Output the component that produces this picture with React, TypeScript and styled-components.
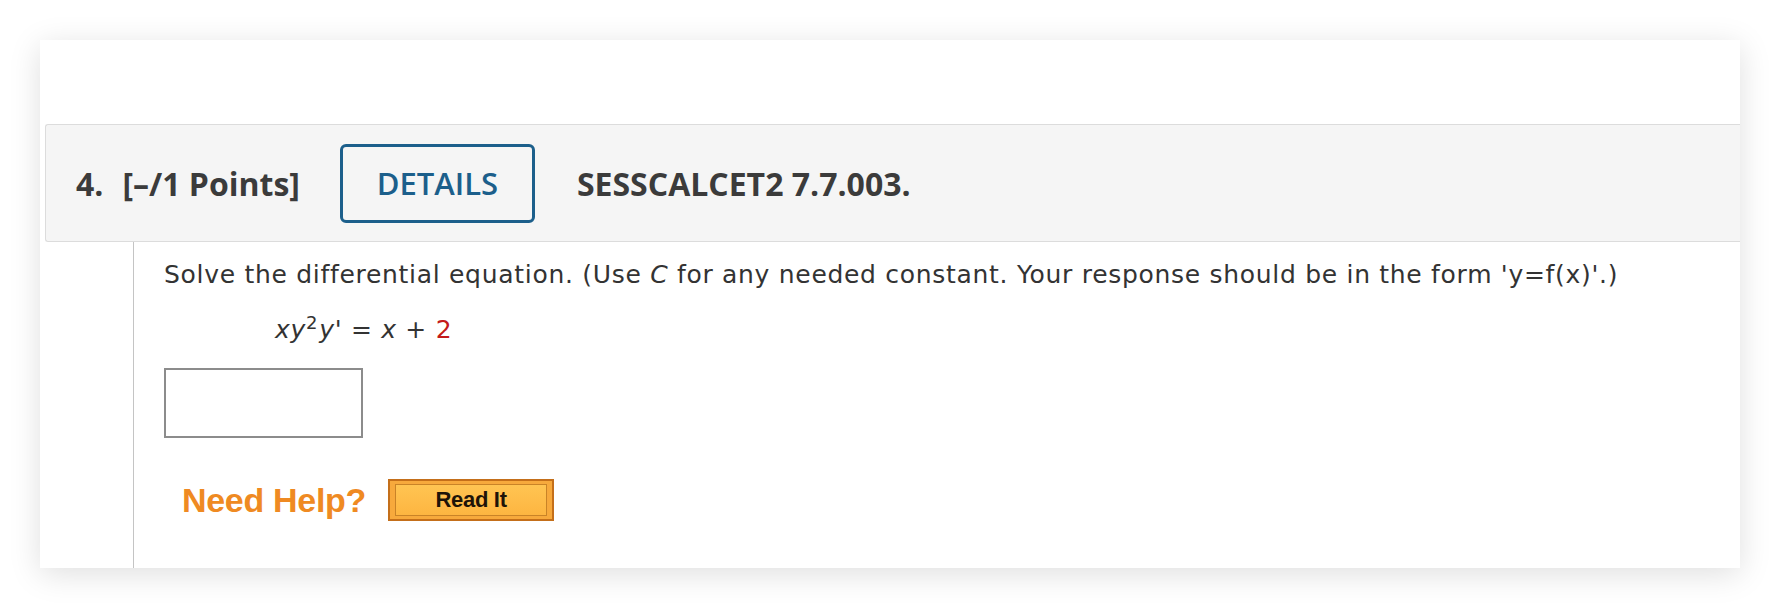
import React from "react";
import styled, { createGlobalStyle } from "styled-components";

const GlobalStyle = createGlobalStyle`
  html, body {
    margin: 0;
    padding: 0;
    background: #ffffff;
  }
`;

const Page = styled.div`
  padding: 40px;
  width: 1780px;
  height: 608px;
  box-sizing: border-box;
  overflow: hidden;
`;

const Card = styled.div`
  width: 1700px;
  height: 528px;
  background: #ffffff;
  box-shadow: 0 6px 30px rgba(0, 0, 0, 0.13);
  padding: 84px 0 0 5px;
  box-sizing: border-box;
  display: flex;
  flex-direction: column;
`;

const Header = styled.div`
  height: 118px;
  box-sizing: border-box;
  background: #f5f5f5;
  border: 1px solid #dcdcdc;
  border-right: none;
  border-radius: 3px 0 0 3px;
  display: flex;
  align-items: center;
  padding-left: 30px;
  font-family: "Open Sans", "DejaVu Sans", sans-serif;
  color: #3b3b3b;
`;

const Title = styled.span<{ gap?: number }>`
  font-size: 32px;
  font-weight: 700;
  margin-right: ${(p) => p.gap ?? 0}px;
`;

const DetailsButton = styled.button`
  width: 195px;
  height: 79px;
  box-sizing: border-box;
  border: 3px solid #1c5f8b;
  border-radius: 6px;
  background: transparent;
  color: #1c5f8b;
  font-family: "Open Sans", sans-serif;
  font-size: 31px;
  font-weight: 600;
  padding: 0;
  margin-right: 42px;
  cursor: pointer;
`;

const Body = styled.div`
  flex: 1;
  margin-left: 88px;
  border-left: 1px solid #c4c4c4;
  padding: 19px 0 0 30px;
  font-family: "DejaVu Sans", Verdana, sans-serif;
  font-size: 25px;
  line-height: 28px;
  letter-spacing: 0.7px;
  color: #333333;
`;

const Prompt = styled.div``;

const Equation = styled.div`
  margin: 27px 0 0 111px;
`;

const Var = styled.i`
  font-style: italic;
`;

const Sup = styled.sup`
  font-size: 18px;
  line-height: 0;
  vertical-align: 9px;
  margin-right: 1px;
`;

const Red = styled.span`
  color: #c41a1a;
`;

const AnswerBox = styled.input`
  display: block;
  margin-top: 24px;
  width: 199px;
  height: 70px;
  box-sizing: border-box;
  border: 2px solid #8c8c8c;
  background: #ffffff;
  outline: none;
`;

const HelpRow = styled.div`
  margin-top: 41px;
  display: flex;
  align-items: center;
  gap: 22px;
  padding-left: 18px;
`;

const NeedHelp = styled.span`
  font-family: "Liberation Sans", Arial, sans-serif;
  font-weight: 700;
  font-size: 34px;
  letter-spacing: -0.3px;
  color: #ef8a22;
`;

const ReadIt = styled.button`
  width: 166px;
  height: 42px;
  box-sizing: border-box;
  border: 2px solid #c46f1a;
  background: #f7a93c;
  padding: 3px 5px;
  cursor: pointer;
  display: flex;
`;

const ReadItFace = styled.span`
  flex: 1;
  border: 1px solid #c98327;
  background: linear-gradient(#ffc452, #fdb541);
  display: flex;
  align-items: center;
  justify-content: center;
  font-family: "Liberation Sans", Arial, sans-serif;
  font-weight: 700;
  font-size: 22px;
  letter-spacing: -0.3px;
  color: #1e1408;
`;

export default function App() {
  return (
    <>
      <GlobalStyle />
      <Page>
        <Card>
          <Header>
            <Title gap={19}>4.</Title>
            <Title gap={40}>[–/1 Points]</Title>
            <DetailsButton>DETAILS</DetailsButton>
            <Title>SESSCALCET2 7.7.003.</Title>
          </Header>
          <Body>
            <Prompt>
              Solve the differential equation. (Use <Var>C</Var> for any needed
              constant. Your response should be in the form 'y=f(x)'.)
            </Prompt>
            <Equation>
              <Var>xy</Var>
              <Sup>2</Sup>
              <Var>y</Var>' = <Var>x</Var> + <Red>2</Red>
            </Equation>
            <AnswerBox type="text" />
            <HelpRow>
              <NeedHelp>Need Help?</NeedHelp>
              <ReadIt>
                <ReadItFace>Read It</ReadItFace>
              </ReadIt>
            </HelpRow>
          </Body>
        </Card>
      </Page>
    </>
  );
}
